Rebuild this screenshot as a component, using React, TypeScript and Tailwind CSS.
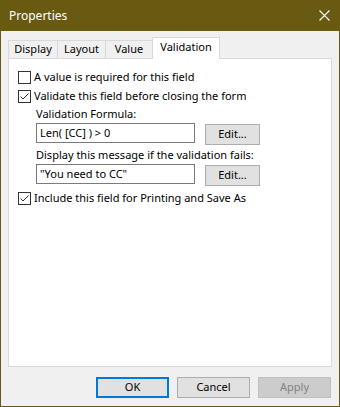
import React from "react";

const font = { fontFamily: '"Noto Sans", "Liberation Sans", sans-serif' };

function Check({ checked }: { checked?: boolean }) {
  return (
    <span className="flex h-[13px] w-[13px] shrink-0 items-center justify-center border border-[#333333] bg-white">
      {checked ? (
        <svg width="11" height="11" viewBox="0 0 11 11">
          <path d="M1.5 5.5 L4 8 L9.5 2.5" fill="none" stroke="#333333" strokeWidth="1" />
        </svg>
      ) : null}
    </span>
  );
}

function CheckRow({ checked, label }: { checked?: boolean; label: string }) {
  return (
    <div className="flex h-[19px] items-center gap-[3px]">
      <Check checked={checked} />
      <span className="text-[11px] text-black">{label}</span>
    </div>
  );
}

function Field({ value }: { value: string }) {
  return (
    <div className="flex items-start gap-[10px]">
      <div className="flex h-[20px] w-[159px] items-center border border-[#7a7a7a] bg-white px-[3px] text-[11px] text-black">
        {value}
      </div>
      <button className="mt-px h-[21px] w-[55px] border border-[#adadad] bg-[#e1e1e1] text-[11px] text-black">Edit...</button>
    </div>
  );
}

export default function App() {
  const tabs = ["Display", "Layout", "Value"];
  const widths = ["w-[50px]", "w-[49px]", "w-[48px]"];
  return (
    <div className="flex h-[407px] w-[340px] flex-col border-x border-b border-[#695a12] bg-[#f0f0f0]" style={font}>
      <div className="-mx-px flex h-[31px] items-center justify-between bg-[#695a12] pl-[9px] pr-[10px]">
        <span className="text-[12px] text-white">Properties</span>
        <svg width="11" height="11" viewBox="0 0 11 11">
          <path d="M0.5 0.5 L10.5 10.5 M10.5 0.5 L0.5 10.5" stroke="white" strokeWidth="1.1" />
        </svg>
      </div>
      <div className="flex flex-1 flex-col px-[7px] pt-[6px]">
        <div className="relative z-10 flex h-[21px] items-end">
          {tabs.map((t, i) => (
            <div
              key={t}
              className={`${widths[i]} -mr-px flex h-[18px] items-center justify-center border-x border-t border-[#d9d9d9] bg-[#f0f0f0] text-[11px] text-black`}
            >
              {t}
            </div>
          ))}
          <div className="-mb-px flex h-[22px] w-[68px] items-center justify-center border-x border-t border-[#d9d9d9] bg-white pb-[2px] text-[11px] text-black">
            Validation
          </div>
        </div>
        <div className="h-[309px] border border-[#d9d9d9] bg-white pl-[9px] pt-[9px]">
          <CheckRow label="A value is required for this field" />
          <CheckRow checked label="Validate this field before closing the form" />
          <div className="pl-[18px]">
            <div className="flex h-[17px] items-center text-[11px] text-black">Validation Formula:</div>
            <Field value="Len( [CC] ) > 0" />
            <div className="mt-[2px] flex h-[17px] items-center text-[11px] text-black">Display this message if the validation fails:</div>
            <Field value={'"You need to CC"'} />
          </div>
          <div className="mt-[3px]">
            <CheckRow checked label="Include this field for Printing and Save As" />
          </div>
        </div>
        <div className="mt-[10px] flex justify-end gap-[8px] pr-px">
          <button className="h-[21px] w-[73px] border-2 border-[#0078d7] bg-[#e1e1e1] text-[11px] text-black">OK</button>
          <button className="h-[21px] w-[73px] border border-[#adadad] bg-[#e1e1e1] text-[11px] text-black">Cancel</button>
          <button className="h-[21px] w-[73px] border border-[#bfbfbf] bg-[#cccccc] text-[11px] text-[#838383]">Apply</button>
        </div>
      </div>
    </div>
  );
}
